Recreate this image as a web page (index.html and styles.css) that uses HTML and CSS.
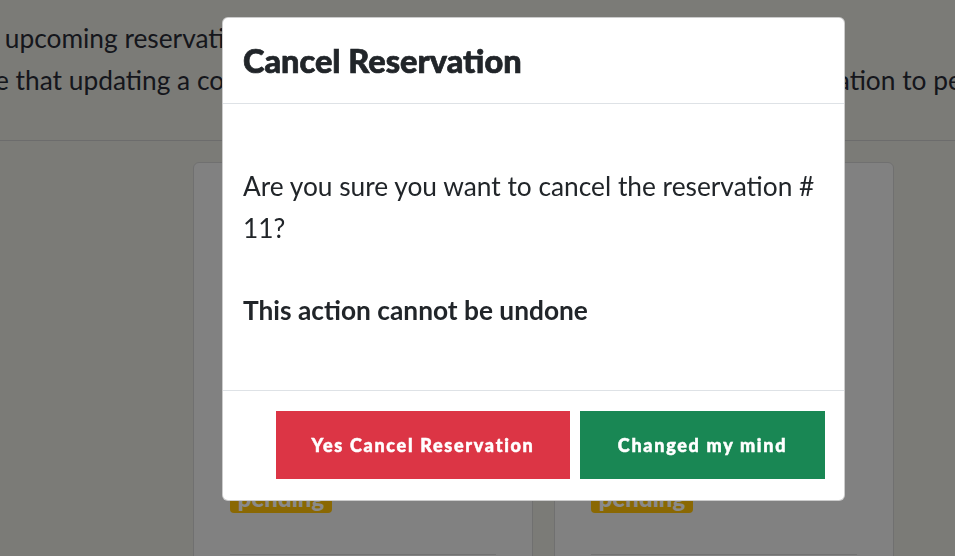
FILE: index.html
```html
<!DOCTYPE html>
<html lang="en">
<head>
<meta charset="utf-8">
<title>Cancel Reservation</title>
<link rel="stylesheet" href="styles.css">
</head>
<body>
<div class="page">
  <header class="intro">
    <div class="intro-line line-one">r upcoming reservations are listed below.</div>
    <div class="intro-line line-two">e that updating a confirmed reservation will reset the status of this reservation to pending.</div>
  </header>
  <section class="cards">
    <div class="card">
      <div class="card-spacer"></div>
      <span class="badge">pending</span>
      <div class="card-rule"></div>
    </div>
    <div class="card">
      <div class="card-spacer"></div>
      <span class="badge">pending</span>
      <div class="card-rule"></div>
    </div>
  </section>
</div>

<div class="backdrop"></div>

<div class="modal" role="dialog" aria-labelledby="modal-title">
  <div class="modal-header">
    <h2 id="modal-title" class="modal-title">Cancel Reservation</h2>
  </div>
  <div class="modal-body">
    <p class="question">Are you sure you want to cancel the reservation # 11?</p>
    <p class="warning">This action cannot be undone</p>
  </div>
  <div class="modal-footer">
    <button class="btn btn-danger">Yes Cancel Reservation</button>
    <button class="btn btn-success">Changed my mind</button>
  </div>
</div>
</body>
</html>
```

FILE: styles.css
```css
* { box-sizing: border-box; }

html, body {
  margin: 0;
  padding: 0;
  height: 100%;
  overflow: hidden;
}

body {
  background: #e4e4dc;
  font-family: "Lato", "Open Sans", sans-serif;
  color: #212529;
}

.page {
  width: 955px;
  overflow: hidden;
}

.intro {
  height: 141px;
  padding-top: 17px;
  border-bottom: 1px solid #c8c8c8;
  overflow: hidden;
}

.intro-line {
  white-space: nowrap;
  font-size: 26.3px;
  line-height: 42px;
  color: #272a34;
}

.line-one { margin-left: -11px; }
.line-two { margin-left: -5px; }

.cards {
  display: flex;
  gap: 21px;
  padding: 21px 0 0 193px;
}

.card {
  width: 340px;
  height: 420px;
  background: #eeeeee;
  border: 1px solid #cfcfcf;
  border-radius: 6px;
  padding: 0 36px;
  display: flex;
  flex-direction: column;
  align-items: flex-start;
}

.card-spacer { height: 325px; }

.badge {
  display: inline-block;
  width: 102px;
  height: 25px;
  background: #ffc107;
  color: #ffffff;
  border-radius: 4px;
  font-weight: 900;
  font-size: 24px;
  line-height: 20px;
  text-align: center;
}

.card-rule {
  margin-top: 41px;
  width: 100%;
  border-top: 1px solid #d4d4d4;
}

.backdrop {
  position: fixed;
  inset: 0;
  background: rgba(0, 0, 0, 0.46);
}

.modal {
  position: fixed;
  left: 222px;
  top: 17px;
  width: 623px;
  background: #fff;
  border-radius: 6px;
  border: 1px solid rgba(0, 0, 0, 0.2);
}

.modal-header {
  height: 86px;
  padding: 0 20px;
  display: flex;
  align-items: center;
  border-bottom: 1px solid #dee2e6;
}

.modal-title {
  margin: 0;
  font-family: "Lato", sans-serif;
  font-weight: 900;
  font-size: 32.5px;
  color: #212529;
  -webkit-text-stroke: 0.7px #212529;
}

.modal-body {
  padding: 61px 20px 59px;
  font-size: 26.3px;
  line-height: 42px;
}

.modal-body p { margin: 0; }

.question { margin-bottom: 40px !important; }

.warning { font-weight: 700; }

.modal-footer {
  border-top: 1px solid #dee2e6;
  display: flex;
  justify-content: flex-end;
  gap: 10px;
  padding: 20px 19px 21px;
}

.btn {
  height: 68px;
  border: none;
  border-radius: 0;
  color: #fff;
  font-family: "Lato", sans-serif;
  font-weight: 900;
  font-size: 18px;
  letter-spacing: 1.7px;
  -webkit-text-stroke: 0.5px #fff;
  cursor: pointer;
}

.btn-danger { width: 294px; background: #dc3545; }
.btn-success { width: 245px; background: #198754; }
```
